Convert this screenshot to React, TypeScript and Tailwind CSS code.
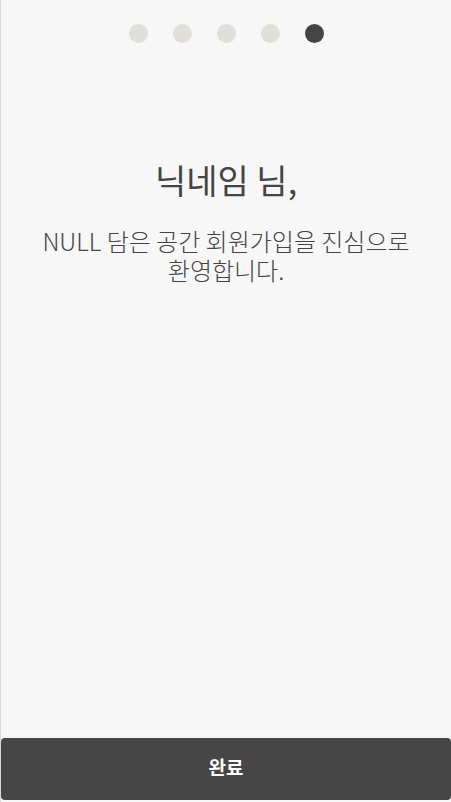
export default function App() {
  const dots = [0, 1, 2, 3, 4];
  return (
    <div
      className="h-[802px] w-[451px] bg-[#f7f7f7] border-l border-[#d9d9d9] flex flex-col"
      style={{ fontFamily: '"Noto Sans CJK KR", "Noto Sans", sans-serif' }}
    >
      <div className="flex justify-center gap-[25px] pt-[24px]">
        {dots.map((i) => (
          <div
            key={i}
            className={`w-[19px] h-[19px] rounded-full ${i === 4 ? "bg-[#444444]" : "bg-[#e1dfd9]"}`}
          />
        ))}
      </div>
      <div className="mt-[113px] text-center text-[#444444] font-light">
        <div className="text-[34px] leading-[48px] font-normal">닉네임 님,</div>
        <div className="mt-[22px] text-[24px] leading-[29px]">
          NULL 담은 공간 회원가입을 진심으로
          <br />
          환영합니다.
        </div>
      </div>
      <div className="flex-1" />
      <div className="pb-[2px]">
        <button className="w-[450px] h-[62px] rounded-[4px] bg-[#464646] text-white text-[19px] font-bold pb-[4px]">
          완료
        </button>
      </div>
    </div>
  );
}
